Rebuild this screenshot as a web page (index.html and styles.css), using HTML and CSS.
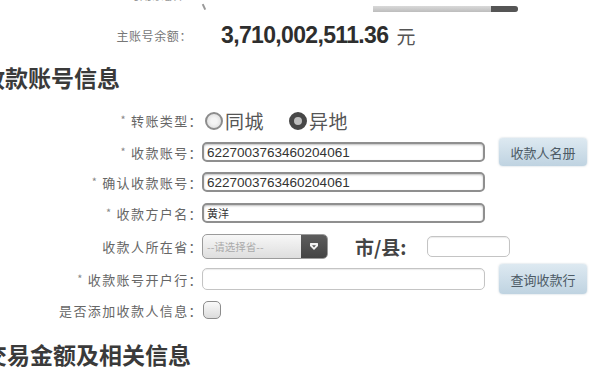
FILE: index.html
```html
<!DOCTYPE html>
<html lang="zh-CN">
<head>
<meta charset="utf-8">
<title>转账</title>
<link rel="stylesheet" href="styles.css">
</head>
<body>
<div class="page">
  <div class="top-strip">
    <span class="top-text">可用余额明细</span>
    <span class="top-tick"></span>
    <span class="top-bar"><span class="top-bar-end"></span></span>
  </div>

  <div class="balance">
    <span class="balance-label">主账号余额：</span>
    <span class="balance-value">3,710,002,511.36</span>
    <span class="balance-unit">元</span>
  </div>

  <h2 class="section-title title-one">收款账号信息</h2>

  <div class="form">
    <div class="label"><span class="star">*</span>转账类型：</div>
    <div class="field radios">
      <span class="radio"></span><span class="radio-text">同城</span>
      <span class="radio radio-checked"></span><span class="radio-text">异地</span>
    </div>

    <div class="label"><span class="star">*</span>收款账号：</div>
    <div class="field">
      <span class="input input-dark">6227003763460204061</span>
      <span class="btn">收款人名册</span>
    </div>

    <div class="label"><span class="star">*</span>确认收款账号：</div>
    <div class="field">
      <span class="input input-dark">6227003763460204061</span>
    </div>

    <div class="label"><span class="star">*</span>收款方户名：</div>
    <div class="field">
      <span class="input input-dark input-name">黄洋</span>
    </div>

    <div class="label">收款人所在省：</div>
    <div class="field">
      <span class="select">
        <span class="select-text">--请选择省--</span>
        <span class="select-arrow"><svg width="10" height="9" viewBox="0 0 10 9"><path d="M1 1.5 Q1 1 1.6 1 H8.4 Q9 1 9 1.5 V4 L5 8 L1 4 Z" fill="#f2f2f2"/><path d="M3 3.2 H7 L5 5.6 Z" fill="#555"/></svg></span>
      </span>
      <span class="city-label">市/县:</span>
      <span class="input input-light input-small"></span>
    </div>

    <div class="label"><span class="star">*</span>收款账号开户行：</div>
    <div class="field">
      <span class="input input-light"></span>
      <span class="btn btn-query">查询收款行</span>
    </div>

    <div class="label">是否添加收款人信息：</div>
    <div class="field">
      <span class="checkbox"></span>
    </div>
  </div>

  <h2 class="section-title title-two">交易金额及相关信息</h2>
</div>
</body>
</html>
```

FILE: styles.css
```css
* { box-sizing: border-box; }
html, body { margin: 0; padding: 0; background: #fff; }
body {
  font-family: "Noto Sans CJK SC", "Noto Sans", "Liberation Sans", sans-serif;
  color: #555;
  overflow: hidden;
}
.page { width: 603px; height: 371px; overflow: hidden; }

.top-strip {
  height: 18px;
  display: flex;
  align-items: flex-start;
  overflow: hidden;
}
.top-text {
  margin-left: 128px;
  margin-top: -13px;
  font-size: 12px;
  line-height: 16px;
  color: #9a9a9a;
  width: 54px;
  overflow: hidden;
  white-space: nowrap;
}
.top-tick {
  margin-left: 21px;
  margin-top: 4px;
  width: 1.5px;
  height: 6px;
  background: #999;
  transform: rotate(-25deg);
}
.top-bar {
  margin-left: 168px;
  margin-top: 6px;
  width: 145px;
  height: 6px;
  background: linear-gradient(#d9d9d9, #bdbdbd);
  display: flex;
  justify-content: flex-end;
  border-radius: 0 3px 3px 0;
}
.top-bar-end {
  width: 27px;
  height: 6px;
  background: #555;
  border-radius: 0 3px 3px 0;
}

.balance {
  height: 34px;
  display: flex;
  align-items: center;
}
.balance-label {
  width: 192px;
  text-align: right;
  font-size: 12px;
  letter-spacing: 0.6px;
  color: #777;
}
.balance-value {
  margin-left: 29px;
  font-family: "Liberation Sans", sans-serif;
  font-weight: 700;
  font-size: 23px;
  letter-spacing: -0.65px;
  color: #2e2e2e;
}
.balance-unit {
  margin-left: 8px;
  font-size: 19px;
  color: #555;
}

.section-title {
  margin: 8px 0 0 0;
  height: 34px;
  line-height: 34px;
  font-size: 23px;
  font-weight: 700;
  color: #3a3a3a;
  white-space: nowrap;
}
.title-one { margin-left: -18px; }
.title-two { margin-left: -16px; margin-top: 12px; }

.form {
  margin-top: 10px;
  display: grid;
  grid-template-columns: 197px auto;
  grid-template-rows: 33px 30px 30px 32px 34px 32px 30px;
  column-gap: 5px;
}
.label {
  display: flex;
  align-items: center;
  justify-content: flex-end;
  margin-right: -6px;
  font-size: 13px;
  letter-spacing: 1.4px;
  color: #666;
  white-space: nowrap;
}
.star { color: #888; font-size: 11px; margin-right: 4px; margin-top: -3px; }
.field {
  display: flex;
  align-items: center;
}

.radios { font-size: 19px; color: #555; }
.radio {
  width: 18px;
  height: 18px;
  border-radius: 50%;
  border: 2px solid #8c8c8c;
  background: radial-gradient(circle, #f4f4f4 30%, #d6d6d6 100%);
  margin-left: 3px;
}
.radio-checked {
  margin-left: 25px;
  border: 5px solid #474747;
  background: #bdbdbd;
}
.radio-text { margin-left: 2px; line-height: 24px; letter-spacing: 0.5px; }

.input {
  width: 283px;
  height: 20px;
  border-radius: 5px;
  font-family: "Liberation Sans", sans-serif;
  font-size: 13.5px;
  line-height: 16px;
  padding: 1px 0 0 3px;
  color: #333;
  background: #fff;
}
.input-dark {
  border: 2px solid #8f8f8f;
  box-shadow: inset 0 1px 2px rgba(0, 0, 0, 0.25);
}
.input-name {
  font-family: "Noto Sans CJK SC", sans-serif;
  font-size: 11px;
  line-height: 15px;
}
.input-light {
  border: 1px solid #c4c4c4;
  box-shadow: inset 0 1px 1px rgba(0, 0, 0, 0.08);
  height: 22px;
}
.input-small {
  width: 83px;
  height: 21px;
  margin-left: 20px;
}

.btn {
  margin-left: 14px;
  width: 88px;
  height: 28px;
  border-radius: 4px;
  background: linear-gradient(#dde9f1, #bfd3e1);
  box-shadow: 0 0 2px rgba(120, 150, 170, 0.5);
  display: flex;
  align-items: center;
  justify-content: center;
  font-size: 13px;
  color: #4d5b66;
}
.btn-query { height: 30px; }

.select {
  width: 126px;
  height: 25px;
  border: 1px solid #9b9b9b;
  border-radius: 5px;
  background: linear-gradient(#f7f7f7, #dedede);
  display: flex;
  overflow: hidden;
}
.select-text {
  flex: 1;
  font-size: 10.5px;
  color: #aaa;
  line-height: 23px;
  padding-left: 4px;
  white-space: nowrap;
}
.select-arrow {
  width: 26px;
  background: linear-gradient(#5d5d5d, #444);
  display: flex;
  align-items: center;
  justify-content: center;
}
.city-label {
  margin-left: 27px;
  font-size: 19px;
  font-weight: 700;
  color: #444;
}

.checkbox {
  margin-left: 1px;
  width: 18px;
  height: 18px;
  border: 1.5px solid #8c8c8c;
  border-radius: 5px;
  background: linear-gradient(#fafafa, #dcdcdc);
}
```
